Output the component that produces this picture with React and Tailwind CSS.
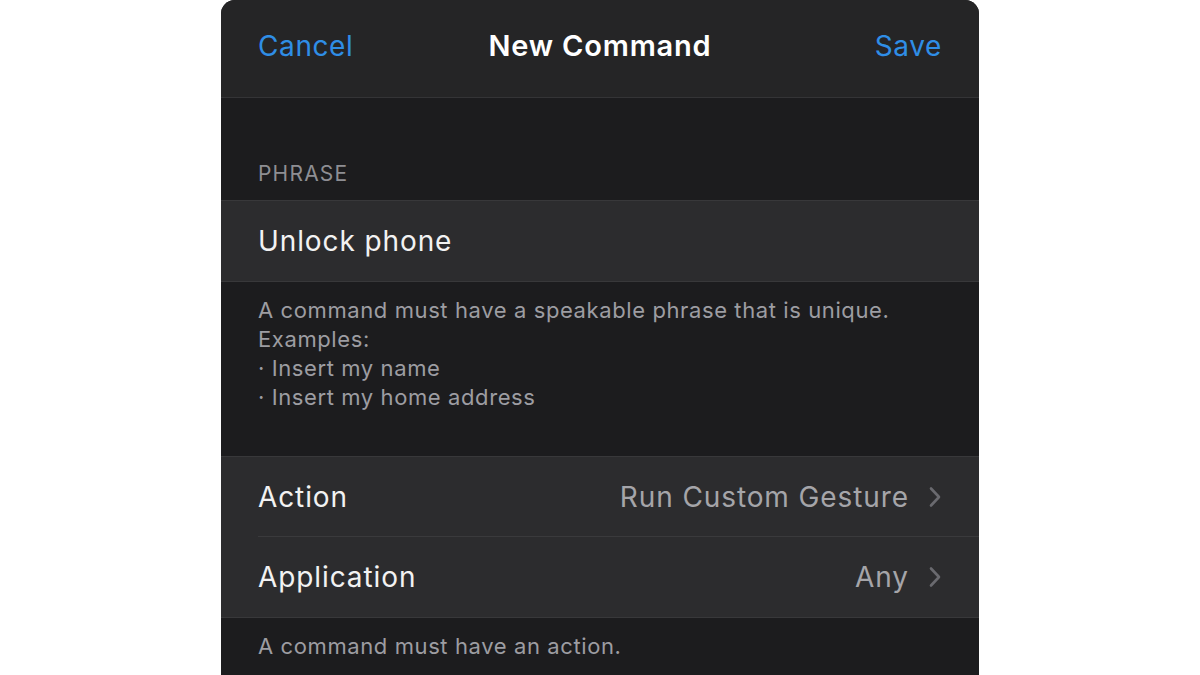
const font = { fontFamily: 'Inter, "Noto Sans", sans-serif' }

function Chevron() {
  return (
    <svg width="12" height="22" viewBox="0 0 12 22" className="ml-[20px]" fill="none">
      <path d="M2 2.5 10 11 2 19.5" stroke="#6a6a6f" strokeWidth="2.6" strokeLinecap="round" strokeLinejoin="round" />
    </svg>
  )
}

function Row({ label, value, divider }) {
  return (
    <div className="flex h-[80px] items-center pl-[37px]">
      <div className={`flex h-full flex-1 items-center pr-[38px] ${divider ? 'border-b border-[#3a3a3c]' : ''}`}>
        <span className="text-[28px] text-[#f2f2f2] tracking-[0.9px]">{label}</span>
        <span className="ml-auto text-[28px] text-[#a5a5a9] tracking-[0.9px]">{value}</span>
        <Chevron />
      </div>
    </div>
  )
}

export default function App() {
  return (
    <div className="flex h-[675px] w-[1200px] justify-center overflow-hidden bg-white" style={font}>
      <div className="flex w-[758px] flex-col overflow-hidden rounded-t-[14px] bg-[#1c1c1e]">
        {/* header */}
        <div className="flex h-[98px] shrink-0 items-center border-b border-[#343436] bg-[#252526] px-[37px] pb-[5px]">
          <span className="w-[150px] text-[28px] text-[#2f8ee6] tracking-[0.6px]">Cancel</span>
          <span className="flex-1 text-center text-[29px] font-semibold text-white tracking-[0.8px]">New Command</span>
          <span className="w-[150px] text-right text-[28px] text-[#2f8ee6] tracking-[0.6px]">Save</span>
        </div>

        <div className="h-[55px] shrink-0" />
        <div className="flex h-[47px] shrink-0 items-start pl-[37px] pt-[5px] text-[21px] text-[#8e8e93] tracking-[1.2px]">PHRASE</div>

        <div className="flex h-[82px] shrink-0 items-center border-y border-[#38383a] bg-[#2c2c2e] pl-[37px]">
          <span className="text-[28px] text-[#f2f2f2] tracking-[0.9px]">Unlock phone</span>
        </div>

        <div className="shrink-0 px-[37px] pt-[14px] pb-[44px] text-[22px] leading-[29px] text-[#9d9da2] tracking-[0.6px]">
          <p>A command must have a speakable phrase that is unique.</p>
          <p>Examples:</p>
          <p>· Insert my name</p>
          <p>· Insert my home address</p>
        </div>

        <div className="shrink-0 border-y border-[#38383a] bg-[#2c2c2e]">
          <Row label="Action" value="Run Custom Gesture" divider />
          <Row label="Application" value="Any" />
        </div>

        <div className="px-[37px] pt-[14px] text-[22px] leading-[29px] text-[#9d9da2] tracking-[0.6px]">
          A command must have an action.
        </div>
      </div>
    </div>
  )
}
